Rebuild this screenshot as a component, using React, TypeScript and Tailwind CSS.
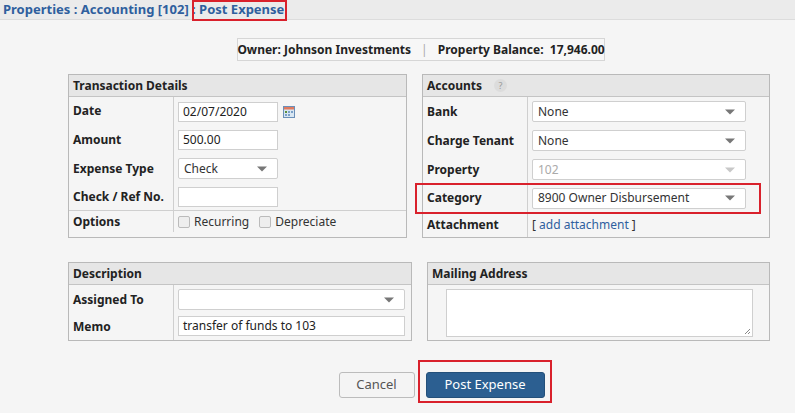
import React from "react";

const Caret = () => (
  <span className="absolute right-[10px] top-1/2 -translate-y-1/2 w-0 h-0 border-l-[5px] border-r-[5px] border-t-[5px] border-l-transparent border-r-transparent border-t-[#777]" />
);

function Select({ value, w, disabled }: { value: string; w: string; disabled?: boolean }) {
  return (
    <div className={`relative h-[21px] ${w} border border-[#cfcfcf] bg-white rounded-[2px] px-[5px] flex items-center text-[12px] ${disabled ? "text-[#aaa] bg-[#f0f0f0]" : "text-[#333]"}`}>
      {value}
      <span className={disabled ? "opacity-40" : ""}><Caret /></span>
    </div>
  );
}

function Input({ value, w }: { value?: string; w: string }) {
  return (
    <div className={`h-[20px] ${w} border border-[#cfcfcf] bg-white px-[4px] flex items-center text-[12px] text-[#222]`}>
      {value}
    </div>
  );
}

function Row({ label, children, h = "h-[29px]", top }: { label: string; children?: React.ReactNode; h?: string; top?: boolean }) {
  return (
    <div className={`flex ${h} ${top ? "border-t border-[#cfcfcf]" : ""}`}>
      <div className="w-[105px] shrink-0 border-r border-[#cfcfcf] px-[4px] flex items-center font-bold text-[12px] text-[#222]">{label}</div>
      <div className="flex-1 px-[4px] flex items-center">{children}</div>
    </div>
  );
}

function Panel({ title, extra, children, w }: { title: string; extra?: React.ReactNode; children: React.ReactNode; w: string }) {
  return (
    <div className={`${w} border border-[#b9b9b9] bg-[#f5f5f5]`}>
      <div className="h-[22px] bg-[#e6e6e6] border-b border-[#c4c4c4] px-[4px] flex items-center font-bold text-[12px] text-[#222] gap-[12px]">
        {title}
        {extra}
      </div>
      {children}
    </div>
  );
}

export default function App() {
  return (
    <div className="relative w-[795px] h-[413px] bg-[#f5f5f5] font-['Liberation_Sans'] overflow-hidden">
      <div className="h-[20px] bg-[#ebebeb] border-b border-[#dcdcdc] px-[3px] flex items-center text-[13px] font-bold text-[#2f5f9e] whitespace-nowrap">
        Properties : Accounting [102] : Post Expense
      </div>

      <div className="flex justify-center mt-[18px] ml-[47px]">
        <div className="h-[23px] w-[368px] border border-[#d6d6d6] bg-[#f7f7f7] flex items-center justify-center gap-[10px] text-[12px] font-bold text-[#222] whitespace-nowrap">
          <span>Owner: Johnson Investments</span>
          <span className="text-[#aaa] font-normal">|</span>
          <span>Property Balance:&nbsp; 17,946.00</span>
        </div>
      </div>

      <div className="flex ml-[68px] mt-[13px] gap-[15px]">
        <Panel title="Transaction Details" w="w-[339px]">
          <Row label="Date" h="h-[28px]">
            <div className="flex items-center gap-[5px] pt-[2px]">
              <Input value="02/07/2020" w="w-[100px]" />
              <svg width="12" height="12" viewBox="0 0 12 12">
                <rect x="0.5" y="0.5" width="11" height="11" fill="#d8e6f2" stroke="#6b8fb8" />
                <rect x="1" y="1" width="10" height="2.5" fill="#e07a5f" />
                <rect x="2" y="5" width="2" height="2" fill="#5a8f3c" />
                <rect x="5" y="5" width="2" height="2" fill="#7aa0c8" />
                <rect x="8" y="5" width="2" height="2" fill="#7aa0c8" />
                <rect x="2" y="8" width="2" height="2" fill="#7aa0c8" />
                <rect x="5" y="8" width="2" height="2" fill="#7aa0c8" />
              </svg>
            </div>
          </Row>
          <Row label="Amount"><Input value="500.00" w="w-[100px]" /></Row>
          <Row label="Expense Type"><Select value="Check" w="w-[100px]" /></Row>
          <Row label="Check / Ref No." h="h-[27px]"><Input w="w-[100px]" /></Row>
          <Row label="Options" h="h-[22px]" top>
            <div className="flex items-center gap-[4px] text-[12px] text-[#333]">
              <span className="w-[12px] h-[12px] border border-[#bbb] rounded-[2px] bg-[#eee]" />
              <span className="mr-[6px]">Recurring</span>
              <span className="w-[12px] h-[12px] border border-[#bbb] rounded-[2px] bg-[#eee]" />
              <span>Depreciate</span>
            </div>
          </Row>
        </Panel>

        <Panel
          title="Accounts"
          w="w-[348px]"
          extra={<span className="w-[13px] h-[13px] rounded-full bg-[#dcdcdc] text-[#999] text-[9px] flex items-center justify-center font-normal">?</span>}
        >
          <Row label="Bank"><Select value="None" w="w-[214px]" /></Row>
          <Row label="Charge Tenant"><Select value="None" w="w-[214px]" /></Row>
          <Row label="Property"><Select value="102" w="w-[214px]" disabled /></Row>
          <Row label="Category" h="h-[28px]"><Select value="8900 Owner Disbursement" w="w-[214px]" /></Row>
          <Row label="Attachment" h="h-[25px]">
            <span className="text-[12px] text-[#333]">[ <span className="text-[#2f5f9e]">add attachment</span> ]</span>
          </Row>
        </Panel>
      </div>

      <div className="flex ml-[68px] mt-[24px] gap-[15px]">
        <Panel title="Description" w="w-[344px]">
          <Row label="Assigned To" h="h-[29px]"><Select value="" w="w-[227px]" /></Row>
          <Row label="Memo" h="h-[26px]">
            <div className="pb-[3px]"><Input value="transfer of funds to 103" w="w-[227px]" /></div>
          </Row>
        </Panel>
        <Panel title="Mailing Address" w="w-[343px]">
          <div className="h-[55px] pl-[18px] pr-[16px] pt-[4px]">
            <div className="relative h-[48px] border border-[#cfcfcf] bg-white">
              <svg className="absolute right-[1px] bottom-[1px]" width="7" height="7" viewBox="0 0 7 7">
                <path d="M6 1L1 6M6 4L4 6" stroke="#888" strokeWidth="1" />
              </svg>
            </div>
          </div>
        </Panel>
      </div>

      <div className="flex justify-center gap-[11px] mt-[31px] ml-[88px]">
        <div className="w-[76px] h-[26px] border border-[#bcbcbc] rounded-[3px] bg-[#f4f4f4] flex items-center justify-center text-[13px] text-[#555]">Cancel</div>
        <div className="w-[119px] h-[26px] rounded-[3px] bg-[#2c5f91] border border-[#24507a] flex items-center justify-center text-[13px] text-white">Post Expense</div>
      </div>

      <div className="absolute left-[192px] top-0 w-[95px] h-[21px] border-2 border-[#d9212c]" />
      <div className="absolute left-[415px] top-[183px] w-[346px] h-[31px] border-2 border-[#d9212c]" />
      <div className="absolute left-[418px] top-[360px] w-[134px] h-[43px] border-2 border-[#d9212c]" />
    </div>
  );
}
